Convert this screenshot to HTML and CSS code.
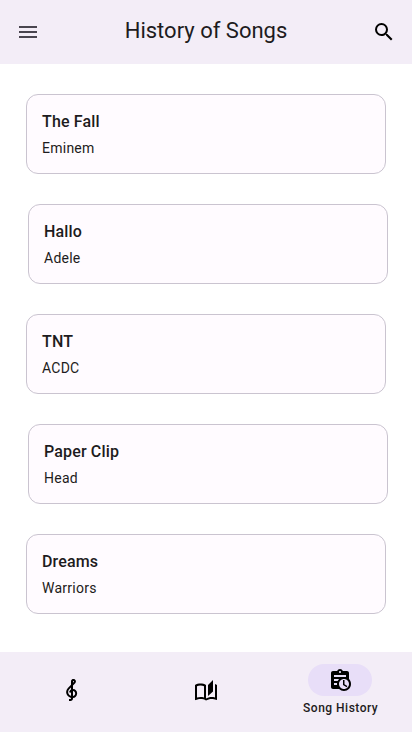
FILE: index.html
```html
<!DOCTYPE html>
<html lang="en">
<head>
<meta charset="utf-8">
<meta name="viewport" content="width=device-width, initial-scale=1">
<title>History of Songs</title>
<link rel="stylesheet" href="styles.css">
</head>
<body>
<header class="top-bar">
  <svg class="icon icon-menu" viewBox="0 0 24 24"><path d="M3 18h18v-2H3v2zm0-5h18v-2H3v2zm0-7v2h18V6H3z"/></svg>
  <h1 class="title">History of Songs</h1>
  <svg class="icon" viewBox="0 0 24 24"><path d="M15.5 14h-.79l-.28-.27A6.471 6.471 0 0 0 16 9.5 6.5 6.5 0 1 0 9.5 16c1.61 0 3.09-.59 4.23-1.57l.27.28v.79l5 4.99L20.49 19l-4.99-5zm-6 0C7.01 14 5 11.99 5 9.5S7.01 5 9.5 5 14 7.01 14 9.5 11.99 14 9.5 14z"/></svg>
</header>
<main class="songs">
  <article class="card"><h2 class="song">The Fall</h2><p class="artist">Eminem</p></article>
  <article class="card"><h2 class="song">Hallo</h2><p class="artist">Adele</p></article>
  <article class="card"><h2 class="song">TNT</h2><p class="artist">ACDC</p></article>
  <article class="card"><h2 class="song">Paper Clip</h2><p class="artist">Head</p></article>
  <article class="card"><h2 class="song">Dreams</h2><p class="artist">Warriors</p></article>
</main>
<nav class="bottom-bar">
  <div class="tab tab-clef">
    <svg class="icon" viewBox="0 0 24 24"><path d="M13 11V7.5L15.2 5.29C16 4.5 16.15 3.24 15.59 2.26C15.14 1.47 14.32 1 13.45 1C13.24 1 13 1.03 12.81 1.09C11.73 1.38 11 2.38 11 3.5V6.74L7.86 9.91C6.2 11.6 5.7 14.13 6.61 16.34C7.38 18.24 9.06 19.55 11 19.89V20.5C11 20.76 10.77 21 10.5 21H9V23H10.5C11.85 23 13 21.89 13 20.5V20C15.03 20 17.16 18.08 17.16 15.25C17.16 12.95 15.24 11 13 11M13 3.5C13 3.27 13.11 3.09 13.32 3.03C13.54 2.97 13.77 3.06 13.88 3.26C14 3.46 13.96 3.71 13.8 3.87L13 4.73V3.5M11 11.5C10.03 12.14 9.3 13.24 9.04 14.26L11 14.78V17.83C9.87 17.53 8.9 16.71 8.43 15.57C7.84 14.11 8.16 12.45 9.26 11.33L11 9.5V11.5M13 18V12.94C14.17 12.94 15.18 14.04 15.18 15.25C15.18 17 13.91 18 13 18Z"/></svg>
  </div>
  <div class="tab">
    <svg class="icon" viewBox="0 0 24 24"><path d="M19 1L14 6V17L19 12.5V1M21 5V18.5C19.9 18.15 18.7 18 17.5 18C15.8 18 13.35 18.65 12 19.5V6C10.55 4.9 8.45 4.5 6.5 4.5C4.55 4.5 2.45 4.9 1 6V20.65C1 20.9 1.25 21.15 1.5 21.15C1.6 21.15 1.65 21.1 1.75 21.1C3.1 20.45 5.05 20 6.5 20C8.45 20 10.55 20.4 12 21.5C13.35 20.65 15.8 20 17.5 20C19.15 20 20.85 20.3 22.25 21.05C22.35 21.1 22.4 21.1 22.5 21.1C22.75 21.1 23 20.85 23 20.6V6C22.4 5.55 21.75 5.25 21 5M10 18.41C8.75 18.09 7.5 18 6.5 18C5.44 18 4.18 18.19 3 18.5V7.13C3.91 6.73 5.14 6.5 6.5 6.5C7.86 6.5 9.09 6.73 10 7.13V18.41Z"/></svg>
  </div>
  <div class="tab tab-active">
    <span class="pill"><svg class="icon" viewBox="0 0 24 24"><path fill-rule="evenodd" d="M21 11.11V5C21 3.9 20.11 3 19 3H14.82C14.4 1.84 13.3 1 12 1S9.6 1.84 9.18 3H5C3.9 3 3 3.9 3 5V19C3 20.11 3.9 21 5 21H11.11C12.37 22.24 14.09 23 16 23C19.87 23 23 19.87 23 16C23 14.09 22.24 12.37 21 11.11M12 3C12.55 3 13 3.45 13 4S12.55 5 12 5 11 4.55 11 4 11.45 3 12 3M6 7H18V9H6V7M6 11H11.1C10.5 11.57 10.04 12.25 9.68 13H6V11M6 17V15H9.08C8.97 15.66 8.97 16.34 9.08 17H6M16 21C13.24 21 11 18.76 11 16S13.24 11 16 11 21 13.24 21 16 18.76 21 16 21M16.5 16.25L19.36 17.94L18.61 19.16L15 17V12H16.5V16.25Z"/></svg></span>
    <span class="label">Song History</span>
  </div>
</nav>
</body>
</html>
```
FILE: styles.css
```css
* { box-sizing: border-box; }
body {
  margin: 0;
  height: 732px;
  display: flex;
  flex-direction: column;
  background: #fff;
  color: #1d1b20;
  font-family: Roboto, sans-serif;
}
.icon { display: block; width: 24px; height: 24px; fill: #000; }
.icon-menu { fill: #49454f; }
.top-bar {
  height: 64px;
  padding: 0 16px;
  display: flex;
  align-items: center;
  justify-content: space-between;
  background: #f3edf7;
}
.title { margin: 0; padding-bottom: 2px; font-size: 22px; line-height: 28px; font-weight: 400; }
.songs {
  flex: 1;
  padding: 30px 26px 0;
  display: flex;
  flex-direction: column;
  gap: 30px;
}
.card {
  width: 360px;
  height: 80px;
  padding: 15px;
  border: 1px solid #cac4d0;
  border-radius: 12px;
  background: #fffbff;
}
.card:nth-child(even) { margin-left: 2px; }
.song { margin: 0 0 4px; font-size: 16px; line-height: 24px; font-weight: 500; letter-spacing: 0.15px; }
.artist { margin: 0; font-size: 14px; line-height: 20px; letter-spacing: 0.25px; }
.bottom-bar {
  height: 80px;
  padding: 0 4px;
  display: grid;
  grid-template-columns: repeat(3, 1fr);
  background: #f3edf7;
}
.tab { display: flex; flex-direction: column; align-items: center; padding-top: 27px; }
.tab-clef { padding-top: 26px; padding-left: 2px; }
.tab-active { padding-top: 12px; gap: 4px; }
.pill {
  width: 64px;
  height: 32px;
  display: flex;
  align-items: center;
  justify-content: center;
  border-radius: 16px;
  background: #e8def8;
}
.tab-active .pill { margin-right: 1px; }
.label { font-size: 12px; line-height: 16px; font-weight: 500; letter-spacing: 0.5px; }
```
